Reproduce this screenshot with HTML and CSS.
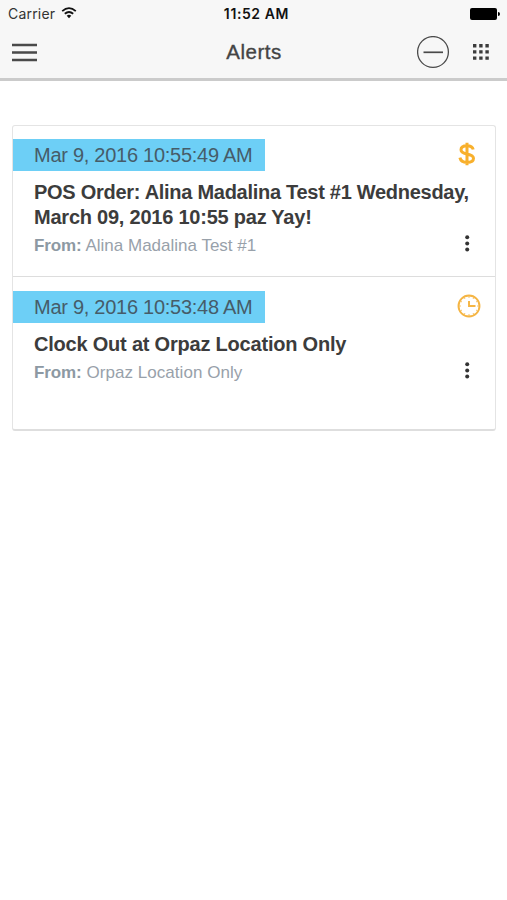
FILE: index.html
```html
<!DOCTYPE html>
<html lang="en">
<head>
<meta charset="utf-8">
<title>Alerts</title>
<link rel="stylesheet" href="styles.css">
</head>
<body>
<header class="header">
  <div class="status">
    <div class="carrier"><span>Carrier</span>
      <svg class="wifi" width="16" height="12" viewBox="0 0 16 12" fill="none" stroke="#111" stroke-width="1.8"><path d="M1.2 4.1Q8-1.9 14.8 4.1M3.8 6.8Q8 3.1 12.2 6.8"/><path d="M5.7 8.8Q8 6.9 10.3 8.8L8 11.2Z" fill="#111" stroke="none"/></svg>
    </div>
    <time class="clock">11:52 AM</time>
    <svg class="battery" width="30" height="12" viewBox="0 0 30 12"><rect width="27" height="12" rx="2"/><path d="M28 4Q30 4 30 6T28 8Z"/></svg>
  </div>
  <nav class="nav">
    <svg class="menu" width="25" height="19" viewBox="0 0 25 19" stroke="#4a4a4a" stroke-width="2.4"><path d="M0 2H25M0 9.5H25M0 17H25"/></svg>
    <h1 class="title">Alerts</h1>
    <div class="actions">
      <svg width="33" height="33" viewBox="0 0 33 33" fill="none" stroke="#4a4a4a"><circle cx="16" cy="16" r="15.4" stroke-width="1.3"/><path d="M6.5 16.3H26" stroke-width="1.7"/></svg>
      <svg class="grid" width="16" height="16" viewBox="0 0 16 16" fill="#3c3c3c"><path d="M0 0h3.4v3.4H0zM6.2 0h3.4v3.4H6.2zM12.4 0h3.4v3.4h-3.4zM0 6.2h3.4v3.4H0zM6.2 6.2h3.4v3.4H6.2zM12.4 6.2h3.4v3.4h-3.4zM0 12.4h3.4v3.4H0zM6.2 12.4h3.4v3.4H6.2zM12.4 12.4h3.4v3.4h-3.4z"/></svg>
    </div>
  </nav>
</header>
<main class="list">
  <article class="alert">
    <div class="top">
      <time class="date">Mar 9, 2016 10:55:49 AM</time>
      <svg class="dollar" width="18" height="24" viewBox="0 0 18 24" fill="none" stroke="#f8b02c" stroke-width="3"><path d="M15.2 7.5C14.5 4.5 12.2 3.7 9 3.7C5.2 3.7 3 5.2 3 7.7C3 10.7 6 11.3 9 12C12.4 12.8 15.5 13.6 15.5 16.3C15.5 19 12.8 20.4 9.1 20.4C5.2 20.4 2.6 18.8 1.9 15.6M9 .8V23.2"/></svg>
    </div>
    <h2 class="subject long">POS Order: Alina Madalina Test #1 Wednesday,<br><span class="wide">March 09, 2016 10:55 paz Yay!</span></h2>
    <div class="foot">
      <p class="from"><b>From:</b> Alina Madalina Test #1</p>
      <svg class="more" width="5" height="17" viewBox="0 0 5 17" fill="#333"><circle cx="2.2" cy="2.3" r="2"/><circle cx="2.2" cy="8.4" r="2"/><circle cx="2.2" cy="14.5" r="2"/></svg>
    </div>
  </article>
  <article class="alert last">
    <div class="top">
      <time class="date">Mar 9, 2016 10:53:48 AM</time>
      <svg class="watch" width="24" height="24" viewBox="0 0 24 24" fill="none" stroke="#f5b544"><circle cx="12" cy="12" r="10.5" stroke-width="1.9"/><path d="M12 7V12H18.5" stroke-width="1.9"/><path d="M12 2V4M12 20V22M2 12H4M20 12H22M7 3.3L8 5M17 3.3L16 5M3.3 7L5 8M3.3 17L5 16M7 20.7L8 19M17 20.7L16 19M20.7 7L19 8M20.7 17L19 16" stroke-width=".8"/></svg>
    </div>
    <h2 class="subject">Clock Out at Orpaz Location Only</h2>
    <div class="foot">
      <p class="from orpaz"><b>From:</b> Orpaz Location Only</p>
      <svg class="more" width="5" height="17" viewBox="0 0 5 17" fill="#333"><circle cx="2.2" cy="2.3" r="2"/><circle cx="2.2" cy="8.4" r="2"/><circle cx="2.2" cy="14.5" r="2"/></svg>
    </div>
  </article>
</main>
</body>
</html>
```
FILE: styles.css
```css
* { box-sizing: border-box; }
body { margin: 0; min-height: 900px; background: #fff; font-family: "Liberation Sans", sans-serif; color: #3c3c3c; }
h1, h2, p { margin: 0; }
svg { display: block; flex: none; }
.header { height: 81px; background: #f7f7f7; border-bottom: 3px solid #cbcbcb; }
.status { display: grid; grid-template-columns: 1fr auto 1fr; align-items: center; height: 27px; padding: 0 7px 0 8px; font-family: Inter, sans-serif; }
.carrier { display: flex; align-items: center; gap: 6px; font-size: 14px; color: #333; }
.carrier span { letter-spacing: .2px; }
.wifi { margin-top: -2px; }
.clock { font-size: 14px; font-weight: 600; color: #111; letter-spacing: .6px; padding-left: 5px; }
.battery { justify-self: end; }
.nav { display: grid; grid-template-columns: 1fr auto 1fr; align-items: center; height: 50px; padding: 0 18px 0 12px; }
.title { font-size: 20.5px; line-height: 24px; font-weight: 400; color: #444; -webkit-text-stroke: .35px #444; letter-spacing: .5px; padding-left: 7px; }
.actions { display: flex; align-items: center; justify-content: flex-end; gap: 23px; }
.grid { margin-top: -1px; }
.list { width: 484px; height: 306px; margin: 44px 0 0 12px; border: 1px solid #e4e4e4; border-bottom: 2px solid #dedede; border-radius: 3px; }
.alert { height: 151px; padding-top: 13px; border-bottom: 1px solid #ddd; }
.alert.last { height: 152px; padding-top: 13.5px; border: 0; }
.top { display: flex; justify-content: space-between; align-items: flex-start; height: 32px; }
.date { width: 252px; height: 32px; padding-left: 21px; background: #6dcff6; font-size: 20px; line-height: 33px; letter-spacing: -.27px; color: #465c69; white-space: nowrap; }
.dollar { margin: 3px 19px 0 0; }
.watch { margin: 3px 14px 0 0; }
.subject { margin: 9px 0 0 21px; font-size: 20px; line-height: 25px; font-weight: 700; letter-spacing: -.21px; white-space: nowrap; }
.subject.long { letter-spacing: -.28px; }
.subject .wide { letter-spacing: -.23px; }
.foot { display: flex; justify-content: space-between; align-items: center; height: 31px; padding: 0 25px 0 21px; }
.from { font-size: 17px; line-height: 24px; color: #98a1aa; white-space: nowrap; }
.from b { color: #8d99a3; letter-spacing: -.1px; }
.from.orpaz { letter-spacing: .05px; padding-top: 1px; }
.more { margin-top: -4px; }
```
